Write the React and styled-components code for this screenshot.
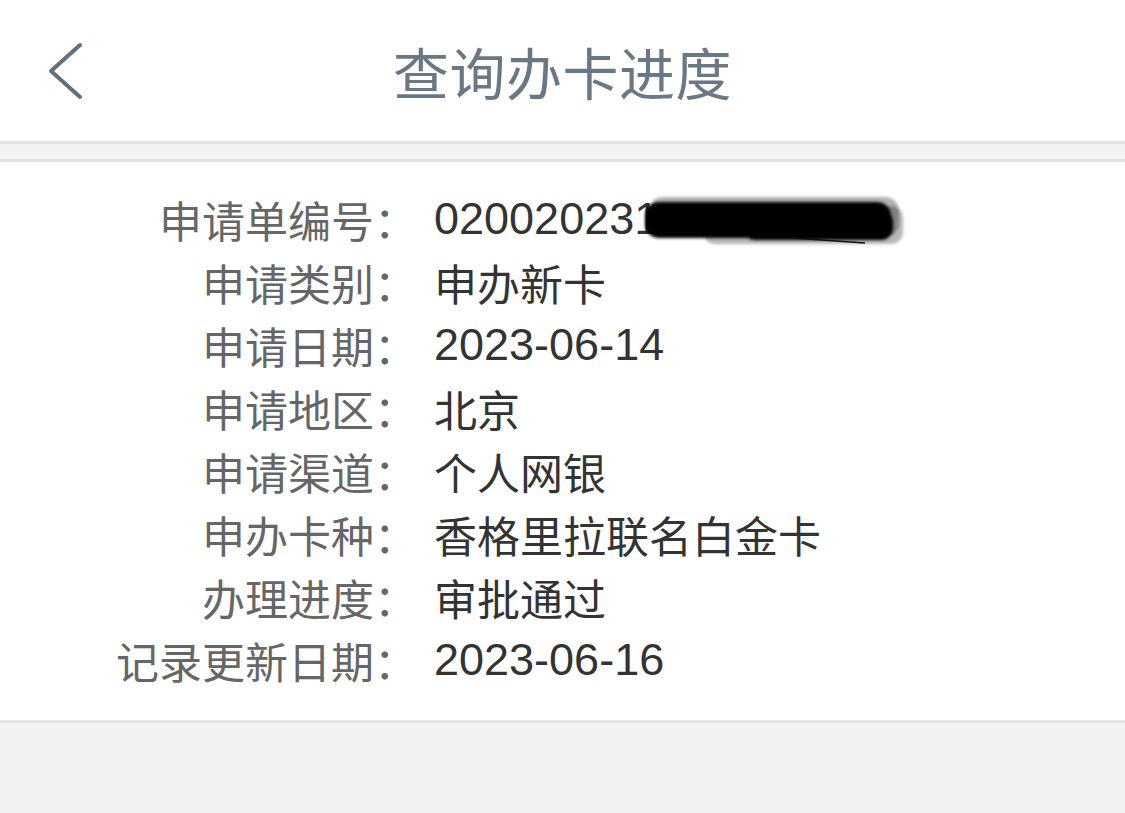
import styled, { createGlobalStyle } from "styled-components";

const GlobalStyle = createGlobalStyle`
  html, body {
    margin: 0;
    padding: 0;
    background: #f2f2f2;
  }
  body {
    font-family: "Liberation Sans", "Noto Sans CJK SC", sans-serif;
  }
`;

const rows = [
  { label: "申请单编号：", value: "020020231", num: true, hidden: true },
  { label: "申请类别：", value: "申办新卡" },
  { label: "申请日期：", value: "2023-06-14", num: true },
  { label: "申请地区：", value: "北京" },
  { label: "申请渠道：", value: "个人网银" },
  { label: "申办卡种：", value: "香格里拉联名白金卡" },
  { label: "办理进度：", value: "审批通过" },
  { label: "记录更新日期：", value: "2023-06-16", num: true },
];

export default function App() {
  return (
    <>
      <GlobalStyle />
      <Page>
        <Header>
          <BackButton>
            <svg width="40" height="60" viewBox="0 0 40 60">
              <polyline
                points="32,4 3,30 32,56"
                fill="none"
                stroke="#617080"
                strokeWidth="4"
                strokeLinecap="round"
                strokeLinejoin="round"
              />
            </svg>
          </BackButton>
          <Title>查询办卡进度</Title>
          <span />
        </Header>
        <Gap />
        <Details>
          {rows.map((r) => (
            <Row key={r.label}>
              <Label>{r.label}</Label>
              <Value $num={r.num}>
                {r.value}
                {r.hidden && (
                  <Redacted>
                    <svg width="268" height="56" viewBox="0 0 268 56">
                      <defs>
                        <filter id="smudge" x="-10%" y="-20%" width="120%" height="140%">
                          <feGaussianBlur stdDeviation="1.6" />
                        </filter>
                      </defs>
                      <g filter="url(#smudge)">
                        <rect x="6" y="3" width="250" height="40" rx="14" fill="#000" opacity="0.3" />
                        <rect x="60" y="12" width="200" height="38" rx="12" fill="#000" opacity="0.28" />
                        <rect x="2" y="8" width="246" height="36" rx="14" fill="#000" />
                        <rect x="100" y="16" width="150" height="30" rx="12" fill="#000" />
                      </g>
                      <line x1="150" y1="44" x2="222" y2="49" stroke="#111" strokeWidth="1.5" />
                    </svg>
                  </Redacted>
                )}
              </Value>
            </Row>
          ))}
        </Details>
      </Page>
    </>
  );
}

const Page = styled.div`
  min-height: 813px;
  background: #f2f2f2;
`;

const Header = styled.div`
  height: 141px;
  background: #ffffff;
  display: grid;
  grid-template-columns: 1fr auto 1fr;
  align-items: center;
  border-bottom: 3px solid #e3e3e3;
`;

const BackButton = styled.div`
  padding-left: 48px;
  display: flex;
  align-items: center;
  svg {
    display: block;
  }
`;

const Title = styled.div`
  font-family: "Noto Sans CJK SC", sans-serif;
  font-size: 56px;
  color: #6a7785;
  line-height: 1;
  letter-spacing: 0.5px;
`;

const Gap = styled.div`
  height: 15px;
  background: #f2f2f2;
  border-bottom: 3px solid #e3e3e3;
`;

const Details = styled.div`
  background: #ffffff;
  padding: 25px 0 29px;
  border-bottom: 3px solid #e3e3e3;
`;

const Row = styled.div`
  display: grid;
  grid-template-columns: 417px 1fr;
  align-items: center;
  height: 63px;
`;

const Label = styled.div`
  text-align: right;
  font-family: "Noto Sans CJK SC", sans-serif;
  font-size: 43px;
  color: #666666;
  white-space: nowrap;
`;

const Value = styled.div`
  padding-left: 17px;
  font-family: "Liberation Sans", "Noto Sans CJK SC", sans-serif;
  font-size: ${(p) => (p.$num ? "45px" : "43px")};
  color: #333333;
  white-space: nowrap;
  display: flex;
  align-items: center;
`;

const Redacted = styled.span`
  display: inline-block;
  margin-left: -16px;
  margin-top: 6px;
  svg {
    display: block;
  }
`;
